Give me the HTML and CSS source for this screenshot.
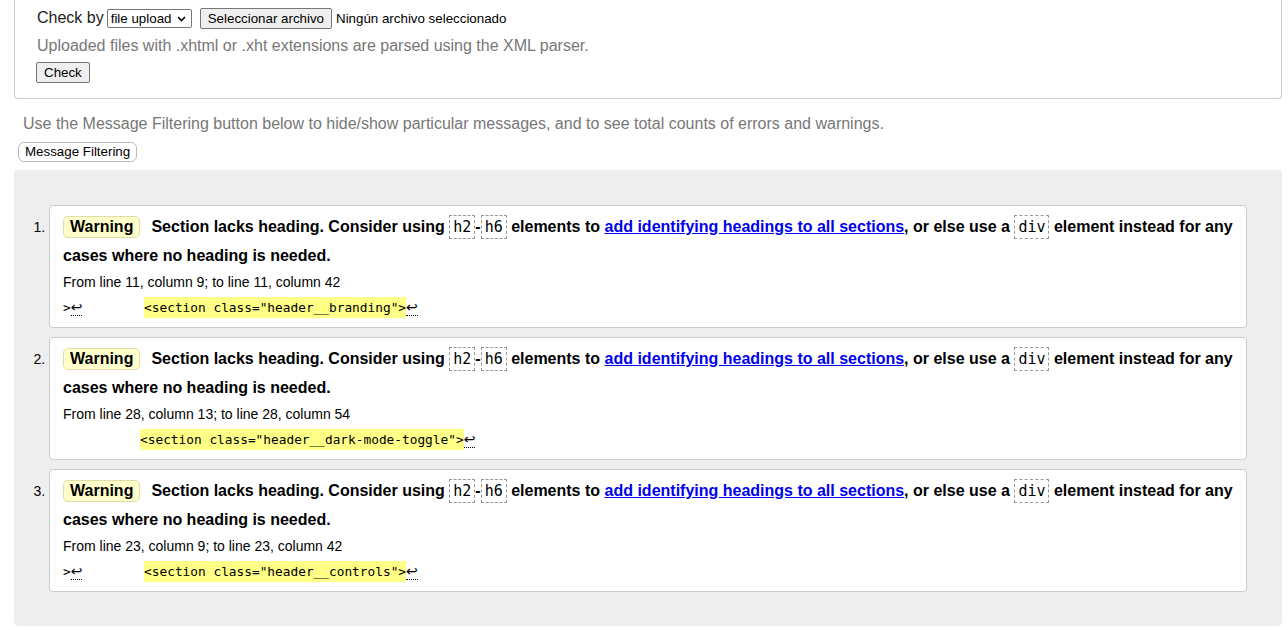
FILE: index.html
```html
<!DOCTYPE html>
<html lang="en">
<head>
<meta charset="utf-8">
<title>Nu Html Checker</title>
<link rel="stylesheet" href="styles.css">
</head>
<body>
<form class="topbox">
  <div class="row row-check">
    <label class="label">Check by</label>
    <span class="select-wrap">
      <select class="select"><option>file upload</option></select>
      <svg class="chev" width="9" height="6" viewBox="0 0 9 6"><path d="M1 1 L4.5 4.5 L8 1" fill="none" stroke="#000" stroke-width="1.6"/></svg>
    </span>
    <button type="button" class="btn btn-file">Seleccionar archivo</button>
    <span class="filename">Ningún archivo seleccionado</span>
  </div>
  <p class="hint">Uploaded files with .xhtml or .xht extensions are parsed using the XML parser.</p>
  <div class="row"><button type="button" class="btn btn-check">Check</button></div>
</form>

<p class="filter-hint">Use the Message Filtering button below to hide/show particular messages, and to see total counts of errors and warnings.</p>
<button type="button" class="btn-filter">Message Filtering</button>

<div class="results">
  <ol class="messages">
    <li class="msg">
      <p class="msg-text"><span class="badge">Warning</span><span>Section lacks heading. Consider using <code class="el">h2</code>-<code class="el">h6</code> elements to <a href="#">add identifying headings to all sections</a>, or else use a <code class="el">div</code> element instead for any cases where no heading is needed.</span></p>
      <p class="loc">From line 11, column 9; to line 11, column 42</p>
      <p class="extract"><code>&gt;<span class="lf">↩</span>        <b class="hl">&lt;section class="header__branding"&gt;</b><span class="lf">↩</span></code></p>
    </li>
    <li class="msg">
      <p class="msg-text"><span class="badge">Warning</span><span>Section lacks heading. Consider using <code class="el">h2</code>-<code class="el">h6</code> elements to <a href="#">add identifying headings to all sections</a>, or else use a <code class="el">div</code> element instead for any cases where no heading is needed.</span></p>
      <p class="loc">From line 28, column 13; to line 28, column 54</p>
      <p class="extract"><code>          <b class="hl">&lt;section class="header__dark-mode-toggle"&gt;</b><span class="lf">↩</span></code></p>
    </li>
    <li class="msg">
      <p class="msg-text"><span class="badge">Warning</span><span>Section lacks heading. Consider using <code class="el">h2</code>-<code class="el">h6</code> elements to <a href="#">add identifying headings to all sections</a>, or else use a <code class="el">div</code> element instead for any cases where no heading is needed.</span></p>
      <p class="loc">From line 23, column 9; to line 23, column 42</p>
      <p class="extract"><code>&gt;<span class="lf">↩</span>        <b class="hl">&lt;section class="header__controls"&gt;</b><span class="lf">↩</span></code></p>
    </li>
  </ol>
</div>
</body>
</html>
```

FILE: styles.css
```css
html, body {
  margin: 0;
  padding: 0;
  background: #fff;
}
body {
  font-family: "Liberation Sans", Arial, sans-serif;
  color: #000;
  font-size: 16px;
}
.topbox {
  margin: 0 6px 0 14px;
  border: 1px solid #ccc;
  border-top: none;
  border-radius: 0 0 4px 4px;
  padding: 7px 22px 15px 22px;
}
.row {
  display: flex;
  align-items: center;
}
.row-check {
  height: 22px;
}
.label {
  font-size: 16px;
  color: #222;
  margin-right: 3px;
}
.select-wrap {
  position: relative;
  display: inline-block;
  margin-right: 8px;
}
.select {
  appearance: none;
  -webkit-appearance: none;
  font-family: "Liberation Sans", Arial, sans-serif;
  font-size: 13.33px;
  height: 19px;
  padding: 0 18px 0 3px;
  border: 1px solid #767676;
  border-radius: 2px;
  background: #fff;
  color: #000;
  width: 85px;
  display: block;
}
.chev {
  position: absolute;
  right: 6px;
  top: 7px;
  pointer-events: none;
}
.btn {
  font-family: "Liberation Sans", Arial, sans-serif;
  font-size: 13.33px;
  background: #efefef;
  border: 1px solid #767676;
  border-radius: 2px;
  color: #000;
  padding: 0 7px;
  height: 21px;
  line-height: 19px;
}
.btn-file {
  margin-right: 4px;
}
.filename {
  font-size: 13.33px;
}
.hint {
  margin: 6px 0 5px 0;
  color: #777;
  font-size: 16px;
  line-height: 22px;
}
.btn-check {
  margin-left: -1px;
}
.filter-hint {
  margin: 14px 0 7px 23px;
  color: #777;
  font-size: 16px;
  line-height: 22px;
}
.btn-filter {
  display: block;
  margin: 0 0 0 18px;
  font-family: "Liberation Sans", Arial, sans-serif;
  font-size: 13.33px;
  height: 20px;
  line-height: 18px;
  padding: 0 6px;
  background: #fff;
  border: 1px solid #bbb;
  border-radius: 6px;
  color: #000;
}
.results {
  margin: 8px 6px 0 14px;
  background: #eee;
  border-radius: 4px;
  padding: 35px 35px 34px 35px;
}
.messages {
  margin: 0;
  padding: 0;
  list-style: decimal outside;
}
.msg {
  background: #fff;
  border: 1px solid #ccc;
  border-radius: 4px;
  padding: 6px 12px 6px 13px;
  margin-bottom: 9px;
  font-size: 14px;
}
.msg:last-child {
  margin-bottom: 0;
}
.msg::marker {
  font-size: 14px;
}
.msg-text {
  margin: 0;
  font-weight: bold;
  font-size: 16px;
  line-height: 29px;
}
.badge {
  display: inline-block;
  background: #ffc;
  border: 1px solid #e2dca8;
  border-radius: 5px;
  padding: 0 6px;
  line-height: 20px;
  margin-right: 11px;
}
.el {
  font-family: "DejaVu Sans Mono", Consolas, monospace;
  font-weight: normal;
  font-size: 15px;
  border: 1px dashed #999;
  padding: 2px 3px;
  line-height: 20px;
}
a {
  color: #00e;
  text-decoration: underline;
}
.loc {
  margin: 0;
  font-size: 14px;
  line-height: 24px;
}
.extract {
  margin: 0;
  line-height: 26px;
}
.extract code {
  font-family: "DejaVu Sans Mono", Consolas, monospace;
  font-size: 12.8px;
  white-space: pre;
}
.hl {
  font-weight: normal;
  background: #ff8;
  padding: 3px 0;
}
.lf {
  font-family: "DejaVu Sans", sans-serif;
  font-size: 14px;
  border-bottom: 1px dotted #000;
}
```
